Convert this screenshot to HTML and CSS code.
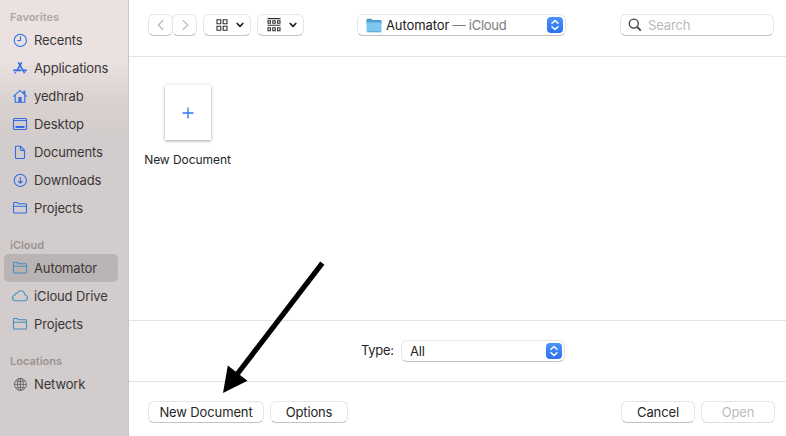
FILE: index.html
```html
<!DOCTYPE html>
<html lang="en">
<head>
<meta charset="utf-8">
<title>Open</title>
<link rel="stylesheet" href="styles.css">
</head>
<body>
<svg width="0" height="0" class="defs">
  <symbol id="folder" viewBox="0 0 16 16"><path d="M1.5 12.2V3.2q0-.7.7-.7h3.1l1.2 1.2h7.3q.7 0 .7.7v7.8q0 .8-.8.8H2.3q-.8 0-.8-.8zM1.5 6.2h13"/></symbol>
  <symbol id="updown" viewBox="0 0 16 16"><path d="M5 6.3 8 3.5l3 2.8M5 9.7l3 2.8 3-2.8" fill="none" stroke="#fff" stroke-width="1.5" stroke-linecap="round" stroke-linejoin="round"/></symbol>
  <symbol id="chev" viewBox="0 0 8 6"><path d="M1.2 1.5 4 4.3l2.8-2.8" fill="none" stroke="#222" stroke-width="1.7" stroke-linecap="round" stroke-linejoin="round"/></symbol>
</svg>
<div class="dialog">
  <nav class="sidebar">
    <section>
      <h2>Favorites</h2>
      <ul>
        <li><svg class="icon" viewBox="0 0 16 16"><circle cx="8.3" cy="8.4" r="6.1"/><path d="M8.5 4.3v4.2H5.2"/></svg><span>Recents</span></li>
        <li><svg class="icon" viewBox="0 0 16 16"><path stroke-width="1.6" d="M6.4 2.3 12.6 13.2M9.7 2.3 5 10.4M3.6 12.3l-.7 1.1M1.2 10.4h8.3M11.5 10.4h3.3"/></svg><span>Applications</span></li>
        <li><svg class="icon" viewBox="0 0 16 16"><path d="M1.2 8.6 8 2.4l6.8 6.2M3.2 7.2v7h9.6v-7M11.8 5.6V3.2h1v3.2"/><path class="solid" d="M6.4 9h3.2v5H6.4z"/></svg><span>yedhrab</span></li>
        <li><svg class="icon" viewBox="0 0 16 16"><rect x="1.5" y="2.5" width="13" height="11" rx="1"/><path d="M1.5 4.5h13"/><path class="solid" d="M3.5 10h9v2h-9z"/></svg><span>Desktop</span></li>
        <li><svg class="icon" viewBox="0 0 16 16"><path d="M3.5 2.2h5l4 4v7.6q0 .7-.7.7H4.2q-.7 0-.7-.7V2.9q0-.7.7-.7M8.4 2.4v3.2q0 .8.8.8h3.2"/></svg><span>Documents</span></li>
        <li><svg class="icon" viewBox="0 0 16 16"><circle cx="8.3" cy="8.4" r="6.1"/><path d="M8.3 5v6.3M6 9l2.3 2.3L10.6 9"/></svg><span>Downloads</span></li>
        <li><svg class="icon"><use href="#folder"/></svg><span>Projects</span></li>
      </ul>
    </section>
    <section class="cloud">
      <h2>iCloud</h2>
      <ul>
        <li class="selected"><svg class="icon"><use href="#folder"/></svg><span>Automator</span></li>
        <li><svg class="icon" viewBox="0 0 16 16"><path d="M3.4 12.8Q.5 12.5.5 10q0-2.2 2.3-2.7Q2.9 5.3 5 5.3q1.2-2.7 4-2.5 3.4.3 3.8 4 2.7.5 2.7 3 0 2.7-2.9 3z"/></svg><span>iCloud Drive</span></li>
        <li><svg class="icon"><use href="#folder"/></svg><span>Projects</span></li>
      </ul>
    </section>
    <section class="locations">
      <h2>Locations</h2>
      <ul>
        <li><svg class="icon" viewBox="0 0 16 16"><circle cx="8.4" cy="8.4" r="6"/><ellipse cx="8.4" cy="8.4" rx="3" ry="6"/><path d="M2.4 8.4h12M8.4 2.4v12M3.7 4.7q4.7 2.2 9.4 0M3.7 12.1q4.7-2.2 9.4 0"/></svg><span>Network</span></li>
      </ul>
    </section>
  </nav>
  <main>
    <header>
      <div class="control nav"><svg width="8" height="12" viewBox="0 0 8 12"><path d="M6.2 1.2 1.2 6l5 4.8"/></svg></div>
      <div class="control nav"><svg width="8" height="12" viewBox="0 0 8 12"><path d="M1.8 1.2 6.8 6l-5 4.8"/></svg></div>
      <div class="control view first">
        <svg width="12" height="12" viewBox="0 0 12 12" class="grid"><path d="M1 .7h3.8v4H1zM7.2.7H11v4H7.2zM1 7.3h3.8v4H1zM7.2 7.3H11v4H7.2z"/></svg>
        <svg width="8" height="6"><use href="#chev"/></svg>
      </div>
      <div class="control view second">
        <svg width="14" height="14" viewBox="0 0 14 14" class="grid"><path d="M.5 .6h13M.5 7.3h13M1 2.7h2.4v2.5H1zM5.8 2.7h2.4v2.5H5.8zM10.6 2.7H13v2.5h-2.4zM1 9.7h2.4v3H1zM5.8 9.7h2.4v3H5.8zM10.6 9.7H13v3h-2.4z"/></svg>
        <svg width="8" height="6"><use href="#chev"/></svg>
      </div>
      <div class="control place">
        <svg width="16" height="15" viewBox="0 0 16 15"><path d="M.5 2Q.5.8 1.5.8h4l1.3 1.1h7.7q1 0 1 1V6H.5z" fill="#4a9cc8"/><path d="M.5 3.8h15v9.3q0 1-1 1h-13q-1 0-1-1z" fill="#7dc8f2"/><path d="M.5 4h15M1 13.8h14" stroke="#58a5cf"/></svg>
        <span class="where"><span class="name">Automator</span> — iCloud</span>
        <svg class="stepper"><use href="#updown"/></svg>
      </div>
      <div class="control search">
        <svg width="14" height="14" viewBox="0 0 14 14"><circle cx="5.8" cy="5.6" r="4.5"/><path d="m9.2 9 3.6 3.6" stroke-width="1.9"/></svg>
        <span>Search</span>
      </div>
    </header>
    <div class="files">
      <div class="file">
        <div class="thumb"><svg width="12" height="12" viewBox="0 0 12 12"><path d="M6 .5v11M.5 6h11"/></svg></div>
        <span>New Document</span>
      </div>
    </div>
    <div class="filter">
      <span class="label">Type:</span>
      <div class="control type"><span>All</span><svg class="stepper"><use href="#updown"/></svg></div>
    </div>
    <footer>
      <div class="control button new"><span>New Document</span></div>
      <div class="control button options"><span>Options</span></div>
      <div class="control button cancel"><span>Cancel</span></div>
      <div class="control button disabled"><span>Open</span></div>
    </footer>
  </main>
  <svg class="arrow" width="106" height="134" viewBox="0 0 106 134"><path d="M101.3 2.2 14 116" stroke="#000" stroke-width="5.2"/><path d="M2 132 6.8 104.5 26.5 119.7z"/></svg>
</div>
</body>
</html>
```
FILE: styles.css
```css
* { box-sizing: border-box; }
body {
  margin: 0;
  font: 13px/16px Inter, "Liberation Sans", sans-serif;
  letter-spacing: -.13px;
  color: #262626;
  background: #fff;
}
.defs { position: absolute; }
.dialog { position: relative; display: flex; width: 786px; height: 436px; overflow: hidden; }

.sidebar {
  display: flex;
  flex-direction: column;
  gap: 14px;
  width: 129px;
  padding: 8px 10px 0 4px;
  border-right: 1px solid #c9c5c5;
  background: linear-gradient(#eae1e0 0, #eae1e0 60px, #d9d2d0 100px, #d3cccc 135px, #d3cccc 100%);
}
h2 { margin: 0; padding-left: 6px; font-size: 11px; line-height: 18px; font-weight: 600; letter-spacing: 0; color: #9a9393; }
section:first-child h2 { color: #aea6a5; }
ul { margin: 0; padding: 0; list-style: none; }
li { display: flex; align-items: center; gap: 6px; height: 28px; padding-left: 8px; border-radius: 5px; color: #393637; white-space: nowrap; }
li.selected { background: #b9b3b3; }
.icon { width: 16px; height: 16px; flex: none; fill: none; stroke: #2f6ee8; stroke-width: 1.1; }
.icon .solid { fill: #2f6ee8; stroke: none; }
.cloud .icon { stroke: #4391be; }
.locations .icon { stroke: #666263; stroke-width: .9; }

main { flex: 1; display: flex; flex-direction: column; }
header { display: flex; height: 57px; padding: 14px 12px 0 19px; border-bottom: 1px solid #e2e2e2; }
.control {
  display: flex;
  align-items: center;
  height: 22px;
  border: 1px solid #e6e6e6;
  border-bottom-color: #c2c2c2;
  border-radius: 6px;
  background: #fff;
}
.nav { width: 25px; justify-content: center; }
.nav + .nav { margin-left: -1px; }
.nav svg { fill: none; stroke: #bababa; stroke-width: 1.2; }
.view { justify-content: space-between; width: 48px; padding: 0 6px 0 12px; }
.first { margin-left: 6px; }
.second { margin-left: 6px; width: 47px; padding: 0 6px 0 9px; }
.grid { fill: none; stroke: #303030; stroke-width: 1.1; }
.place { width: 209px; margin-left: 53px; padding: 0 2px 0 8px; }
.where { flex: 1; margin-left: 4px; color: #7b7b7b; letter-spacing: -.25px; white-space: nowrap; }
.name { color: #1c1c1c; letter-spacing: -.1px; }
.stepper { width: 16px; height: 16px; flex: none; border-radius: 4px; background: linear-gradient(#4a93fa, #2d72f1); }
.search { width: 154px; margin-left: 54px; padding-left: 7px; gap: 6px; color: #b9b9b9; }
.search svg { fill: none; stroke: #454545; stroke-width: 1.4; }

.files { flex: 1; padding: 28px 0 0 15px; }
.file { display: flex; flex-direction: column; align-items: center; width: 88px; font-size: 12px; letter-spacing: -.06px; white-space: nowrap; }
.file span { margin-left: -1px; }
.thumb {
  display: flex;
  align-items: center;
  justify-content: center;
  width: 46px;
  height: 55px;
  margin-bottom: 12px;
  background: #fff;
  box-shadow: 0 1px 3px rgba(0, 0, 0, .36);
}
.thumb svg { stroke: #3275ea; stroke-width: 1.3; }
.filter { display: flex; height: 61px; padding: 19px 0 0 232px; border-top: 1px solid #e2e2e2; }
.label { width: 40px; line-height: 21px; letter-spacing: -.3px; }
.type { width: 164px; padding: 0 2px 0 8px; justify-content: space-between; }
footer { display: flex; height: 55px; padding: 19px 11px 0 19px; border-top: 1px solid #e2e2e2; }
.button { justify-content: center; white-space: nowrap; }
.new { width: 116px; }
.options { width: 78px; margin-left: 6px; }
.cancel { width: 74px; margin-left: auto; }
.disabled { width: 74px; margin-left: 6px; color: #bdbdbd; border-bottom-color: #dcdcdc; }
.arrow { position: absolute; left: 221px; top: 261px; }
```
